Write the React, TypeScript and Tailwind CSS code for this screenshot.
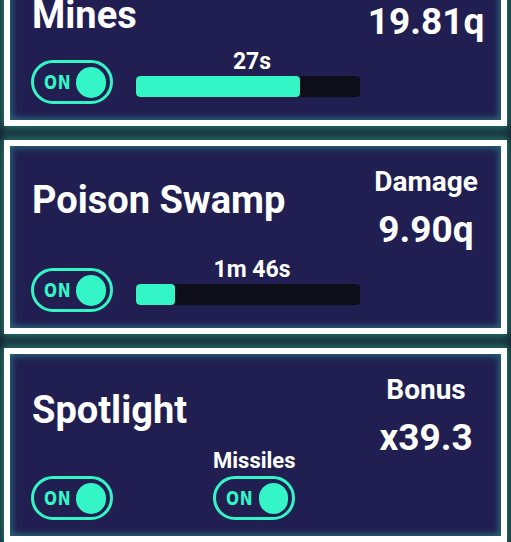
import React from 'react';

const sans = "font-['Roboto','Liberation_Sans',sans-serif]";

interface ToggleProps {
    on: boolean;
}

const Toggle: React.FC<ToggleProps> = ({ on }) => (
    <div className="w-[82px] h-[44px] rounded-full border-[3px] border-[#34f5c6] flex items-center justify-between pl-[10px] pr-[4px]">
        <span className="font-['DejaVu_Sans',sans-serif] [font-stretch:condensed] font-bold text-[20px] leading-none text-[#34f5c6] tracking-[1px] scale-x-[0.85] origin-left">
            {on ? 'ON' : 'OFF'}
        </span>
        <div className="w-[31px] h-[31px] rounded-full bg-[#34f5c6]"></div>
    </div>
);

interface CardProps {
    title: string;
    titleTop: number;
    label?: string;
    value: string;
    timer?: string;
    progress?: number;
    extra?: string;
}

const Card: React.FC<CardProps> = ({ title, titleTop, label, value, timer, progress, extra }) => {
    return (
        <div className="mx-[4px] h-[194px] shrink-0 border-[6px] border-white bg-[#211f51] shadow-[0_0_9px_3px_rgba(52,245,198,0.45),inset_0_0_6px_2px_rgba(52,245,198,0.35)] flex">
            <div className="flex-1 flex flex-col pl-[21px] pb-[16px]">
                <div
                    className={`${sans} font-bold text-[38px] leading-[30px] text-white pl-[1px]`}
                    style={{ marginTop: titleTop }}
                >
                    {title}
                </div>
                <div className="mt-auto flex items-end">
                    <Toggle on={true} />
                    {timer !== undefined && (
                        <div className="ml-[23px] mb-[7px] w-[224px] flex flex-col items-center">
                            <div className={`${sans} font-bold text-[23px] leading-none text-white mb-[3px] pl-[8px]`}>{timer}</div>
                            <div className="w-full h-[21px] rounded-[4px] bg-[#0e0e1b] overflow-hidden">
                                <div className="h-full rounded-[4px] bg-[#34f5c6]" style={{ width: `${progress}%` }}></div>
                            </div>
                        </div>
                    )}
                    {extra && (
                        <div className="ml-[100px] flex flex-col items-center">
                            <div className={`${sans} font-bold text-[22px] leading-none text-white mb-[4px]`}>{extra}</div>
                            <Toggle on={true} />
                        </div>
                    )}
                </div>
            </div>
            <div className="w-[130px] mr-[10px] flex flex-col items-center">
                <div className={`${sans} font-bold text-[28px] h-[28px] leading-none text-white mt-[22px]`}>{label}</div>
                <div className={`${sans} font-bold text-[37px] leading-none text-white mt-[15px]`}>{value}</div>
            </div>
        </div>
    );
};

export default function App() {
    return (
        <div className="h-[542px] overflow-hidden bg-[#161829]">
            <div className="-mt-[68px] flex flex-col gap-[14px]">
                <Card title="Mines" titleTop={62} value="19.81q" timer="27s" progress={73} />
                <Card title="Poison Swamp" titleTop={39} label="Damage" value="9.90q" timer="1m 46s" progress={17.5} />
                <Card title="Spotlight" titleTop={41} label="Bonus" value="x39.3" extra="Missiles" />
            </div>
        </div>
    );
}
